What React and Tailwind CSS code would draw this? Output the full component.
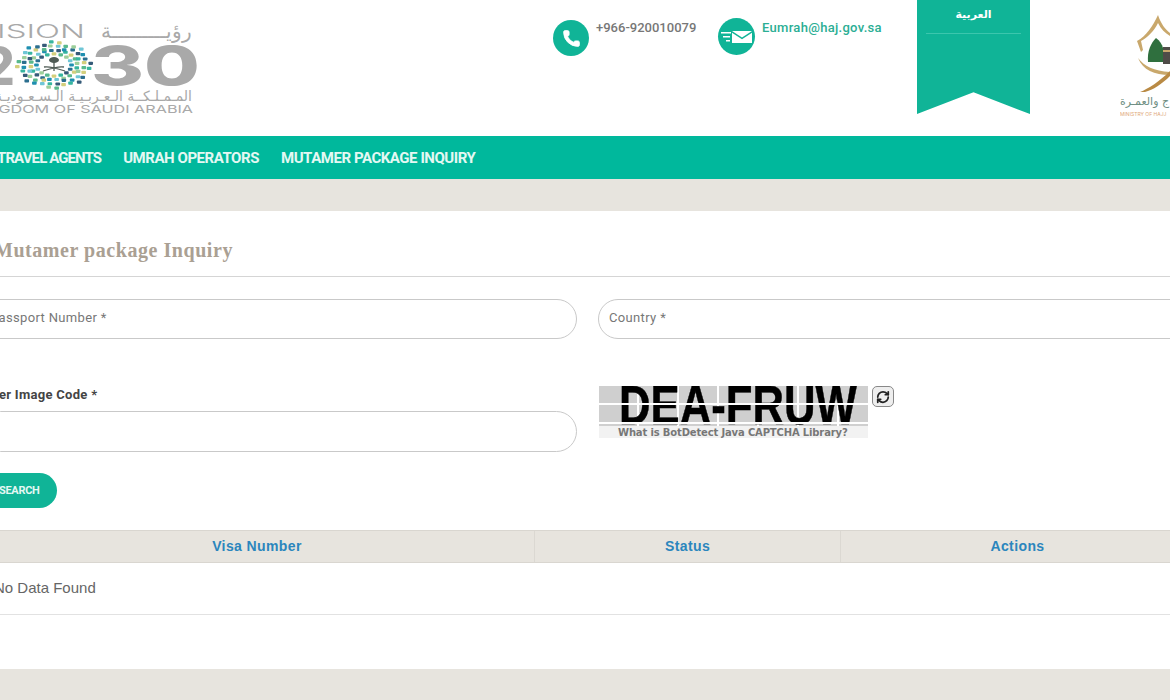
import { Phone, RefreshCw } from "lucide-react";

const dots = [];
const palette = ["#1f8fb0", "#37b6a0", "#9ccf9a", "#2c6f8f", "#d3cf7c", "#6fc6d6", "#355a78", "#59b98c"];
for (let ring = 0; ring < 4; ring++) {
  const count = 16 + ring * 4;
  const radius = 13 + ring * 4.2;
  for (let i = 0; i < count; i++) {
    const a = (i / count) * Math.PI * 2 + ring * 0.2;
    // the outer rings form points, like the star in the logo
    const wave = ring > 1 ? Math.cos(a * 8) * 2 : 0;
    dots.push({
      x: 54 + Math.cos(a) * (radius + wave) * 1.35,
      y: 65 + Math.sin(a) * (radius + wave) * 0.85,
      fill: palette[(i * 3 + ring) % palette.length],
    });
  }
}

function VisionLogo() {
  return (
    <svg width="200" height="120" viewBox="0 0 200 120" className="shrink-0">
      <text x="-25" y="38" fontFamily="Inter, sans-serif" fontWeight="300" fontSize="19" fill="#a9a9a9" textLength="110" lengthAdjust="spacingAndGlyphs">
        VISION
      </text>
      <text x="192" y="38" textAnchor="start" direction="rtl" fontFamily="'DejaVu Sans', sans-serif" fontWeight="300" fontSize="20" fill="#a9a9a9">
        رؤيـــــــــة
      </text>
      <text x="15" y="85" textAnchor="end" fontFamily="Inter, sans-serif" fontWeight="800" fontSize="52" fill="#a9a9a9">
        2
      </text>
      {dots.map((d, i) => (
        <rect key={i} x={d.x - 2.3} y={d.y - 1.6} width="4.6" height="3.2" rx="0.8" fill={d.fill} />
      ))}
      <path d="M54 60v11M44 67c5-1 15 2 21 4M64 67c-5-1-15 2-21 4" stroke="#4f5b55" strokeWidth="1.3" fill="none" />
      <ellipse cx="54" cy="60" rx="5" ry="3" fill="#4f5b55" />
      <text x="91" y="85" fontFamily="Inter, sans-serif" fontWeight="800" fontSize="53" fill="#a9a9a9" textLength="109" lengthAdjust="spacingAndGlyphs">
        30
      </text>
      <text x="192" y="101" textAnchor="start" direction="rtl" fontFamily="'DejaVu Sans', sans-serif" fontSize="14" fill="#a9a9a9">
        المـمـلـكــة الـعـربـيـة الـسـعـوديـة
      </text>
      <text x="-29" y="113" fontFamily="Inter, sans-serif" fontSize="11" fill="#a9a9a9" textLength="222" lengthAdjust="spacingAndGlyphs">
        KINGDOM OF SAUDI ARABIA
      </text>
    </svg>
  );
}

function MinistryLogo() {
  return (
    <svg width="50" height="120" viewBox="0 0 50 120" className="shrink-0">
      <path d="M17 41C26 36 33 26 38 15c3 9 7 14 12 18v3c-5-3-9-7-12-13-4 8-10 14-17 18l2 9-2 2z" fill="#c9a86c" />
      <path d="M28 62c-1-11 3-19 8-24 4 3 6 6 7 10v14z" fill="#2f6f3e" />
      <rect x="43" y="47" width="7" height="17" fill="#4f4c48" />
      <rect x="43" y="50" width="7" height="2" fill="#c9a86c" />
      <path d="M18 58c6 8 16 13 32 14v3C34 75 23 70 18 58z" fill="#c9a86c" />
      <path d="M20 92c8-3 20-11 30-21v5C42 84 33 90 25 92z" fill="#b98a44" />
      <text x="0" y="105" fontFamily="'DejaVu Sans', sans-serif" fontSize="11" fill="#6f8f83">
        ج والعمـرة
      </text>
      <text x="0" y="116" fontFamily="Inter, sans-serif" fontSize="5" fill="#e0a878">
        MINISTRY OF HAJJ
      </text>
    </svg>
  );
}

function MailIcon() {
  return (
    <svg width="31" height="12" viewBox="0 0 31 12" fill="white">
      <path d="M11 0h20l-10 6.500z" />
      <path d="M11 1.800V12h20V1.800L21 8.300z" />
      <path d="M0 1h10v1.500H0zM2 5h7v1.500H2zM5 9h4v1.500H5z" />
    </svg>
  );
}

function Captcha() {
  return (
    <div className="relative ml-[1px] w-[269px] h-[54px] bg-[#f2f2f2] overflow-hidden">
      {/* grey cells sit behind the letters, the horizontal cuts run over them */}
      <div className="absolute inset-x-0 top-0 h-[43px] bg-[#cfcfcf] bg-[linear-gradient(90deg,transparent_38px,#fff_38px,#fff_40px,transparent_40px)] bg-[size:40px_43px]" />
      <span className="absolute left-[20px] top-0 h-[42px] text-[56px] leading-[42px] font-bold text-black [-webkit-text-stroke:0.5px_black] font-['Liberation_Sans'] scale-x-[0.78] origin-left whitespace-nowrap">
        DEA-FRUW
      </span>
      <div className="absolute inset-x-0 top-0 h-[2px] bg-white" />
      <div className="absolute inset-x-0 top-[19px] h-[2px] bg-white" />
      <div className="absolute inset-x-0 top-[38px] h-[2px] bg-white" />
      <div className="absolute inset-x-0 top-[42px] h-[12px] bg-[#f2f2f2] pl-[19px] text-[10px] leading-[14px] font-bold text-[#777] tracking-[-0.15px] font-['DejaVu_Sans'] whitespace-nowrap">
        What is BotDetect Java CAPTCHA Library?
      </div>
    </div>
  );
}

function Input({ placeholder, className }) {
  return (
    <div className={`h-[40px] rounded-full border border-[#c9c9c9] bg-white flex items-center pb-[2px] text-[13px] text-[#777] font-['Roboto'] tracking-[0.35px] ${className}`}>
      {placeholder}
    </div>
  );
}

export default function App() {
  return (
    <div className="h-[700px] w-[1170px] overflow-hidden bg-white font-['Roboto',sans-serif]">
      <header className="h-[136px] flex items-start">
        <div className="w-[553px] shrink-0">
          <VisionLogo />
        </div>
        <div className="mt-[20px] w-[165px] shrink-0 flex items-start gap-[7px]">
          <div className="w-[36px] h-[36px] rounded-full bg-[#10b497] flex items-center justify-center text-white">
            <Phone size={19} fill="white" strokeWidth={1} />
          </div>
          <span className="text-[13px] leading-[15px] font-medium text-[#777]">+966-920010079</span>
        </div>
        <div className="mt-[18px] w-[199px] shrink-0 flex items-start gap-[7px]">
          <div className="w-[37px] h-[37px] rounded-full bg-[#10b497] flex items-center justify-center">
            <MailIcon />
          </div>
          <span className="mt-[2px] text-[13px] leading-[16px] font-medium text-[#2bae94] tracking-[0.3px]">Eumrah@haj.gov.sa</span>
        </div>
        <div className="w-[113px] h-[114px] shrink-0 bg-[#10b497] [clip-path:polygon(0_0,100%_0,100%_100%,50%_81%,0_100%)] flex flex-col items-center">
          <span className="h-[34px] w-[95px] flex items-center justify-center border-b border-[#3cc6ad] pb-[3px] text-[11px] font-bold text-white font-['DejaVu_Sans']">
            العربية
          </span>
        </div>
        <div className="ml-[90px]">
          <MinistryLogo />
        </div>
      </header>

      <nav className="h-[43px] bg-[#00b89c] flex items-center -ml-[3px] gap-[22px] pt-[2px] text-[15px] font-bold text-[#e4f8f3] tracking-[-0.45px] whitespace-nowrap">
        <span className="tracking-[-0.9px]">TRAVEL AGENTS</span>
        <span>UMRAH OPERATORS</span>
        <span>MUTAMER PACKAGE INQUIRY</span>
      </nav>

      <div className="h-[32px] bg-[#e7e4de]" />

      <main className="h-[458px] -mx-[20px]">
        <h1 className="h-[66px] pl-[14px] pt-[26px] text-[20px] leading-[26px] font-bold tracking-[0.55px] text-[#aaa093] font-['Liberation_Serif',serif] border-b border-[#d5d5d5]">
          Mutamer package Inquiry
        </h1>
        <div className="grid grid-cols-[597px_592px] gap-x-[21px] mt-[22px]">
          <Input placeholder="Passport Number *" className="pl-[9px]" />
          <Input placeholder="Country *" className="pl-[10px]" />
          <div className="mt-[46px]">
            <label className="block h-[26px] -ml-[1px] text-[13px] leading-[20px] font-bold text-[#444] tracking-[0.3px]">
              Enter Image Code *
            </label>
            <Input className="h-[41px]" />
          </div>
          <div className="mt-[45px] flex items-start gap-[4px]">
            <Captcha />
            <div className="mt-[2px] w-[22px] h-[21px] rounded-[5px] border border-[#888] bg-[#eee] flex items-center justify-center text-[#222]">
              <RefreshCw size={14} strokeWidth={3} />
            </div>
          </div>
        </div>
        <button className="mt-[21px] h-[35px] w-[77px] rounded-full bg-[#10b497] pt-[1px] text-[11px] font-bold text-[#e4f8f3] pl-[19px] text-left tracking-[-0.3px]">
          SEARCH
        </button>
        <div className="mt-[22px] h-[33px] bg-[#e7e4de] border-t border-b border-[#d9d6d0] grid grid-cols-[554px_306px_1fr] text-[14px] font-bold tracking-[0.4px] text-[#2b86bd] font-['Liberation_Sans']">
          <div className="flex items-center justify-center">Visa Number</div>
          <div className="flex items-center justify-center border-l border-[#dbd8d2]">Status</div>
          <div className="flex items-center justify-center border-l border-[#dbd8d2] pl-[4px]">Actions</div>
        </div>
        <div className="h-[52px] border-b border-[#e2e2e2] pl-[14px] flex items-center text-[15px] text-[#666] font-['Liberation_Sans']">
          No Data Found
        </div>
      </main>

      <div className="h-[31px] bg-[#e7e4de]" />
    </div>
  );
}
